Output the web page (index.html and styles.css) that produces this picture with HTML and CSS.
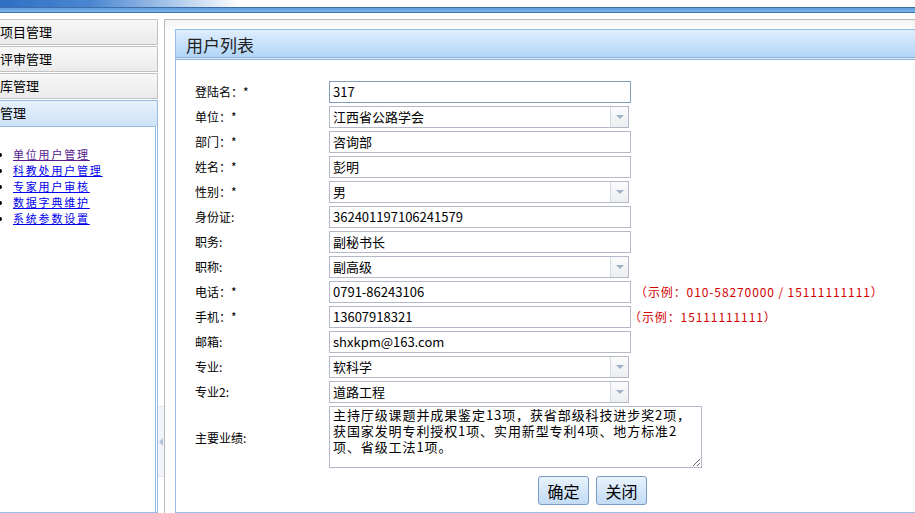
FILE: index.html
```html
<!DOCTYPE html>
<html lang="zh-CN">
<head>
    <meta charset="UTF-8">
    <title>用户列表</title>
    <link rel="stylesheet" href="styles.css">
</head>
<body>

<div class="banner"></div>
<div class="topbar"></div>

<div class="main">
    <aside class="sidebar">
        <div class="acc-head">项目管理</div>
        <div class="acc-head">评审管理</div>
        <div class="acc-head">库管理</div>
        <div class="acc-panel">
            <div class="acc-head active">管理</div>
            <div class="acc-body">
                <ul class="menu">
                    <li><a href="#" class="visited">单位用户管理</a></li>
                    <li><a href="#">科教处用户管理</a></li>
                    <li><a href="#">专家用户审核</a></li>
                    <li><a href="#">数据字典维护</a></li>
                    <li><a href="#">系统参数设置</a></li>
                </ul>
            </div>
        </div>
    </aside>

    <div class="splitter">
        <div class="collapse"><span class="arrow"></span></div>
    </div>

    <section class="content">
        <div class="panel">
            <div class="panel-head">用户列表</div>
            <form class="form">
                <label>登陆名：*</label>
                <div class="field"><input class="text focus" value="317"></div>

                <label>单位：*</label>
                <div class="field"><div class="combo"><span>江西省公路学会</span><i class="trigger"></i></div></div>

                <label>部门：*</label>
                <div class="field"><input class="text" value="咨询部"></div>

                <label>姓名：*</label>
                <div class="field"><input class="text" value="彭明"></div>

                <label>性别：*</label>
                <div class="field"><div class="combo"><span>男</span><i class="trigger"></i></div></div>

                <label>身份证:</label>
                <div class="field"><input class="text" value="362401197106241579"></div>

                <label>职务:</label>
                <div class="field"><input class="text" value="副秘书长"></div>

                <label>职称:</label>
                <div class="field"><div class="combo"><span>副高级</span><i class="trigger"></i></div></div>

                <label>电话：*</label>
                <div class="field"><input class="text" value="0791-86243106"><span class="hint">（示例：010-58270000 / 15111111111）</span></div>

                <label>手机：*</label>
                <div class="field"><input class="text" value="13607918321"><span class="hint near">（示例：15111111111）</span></div>

                <label>邮箱:</label>
                <div class="field"><input class="text" value="shxkpm@163.com"></div>

                <label>专业:</label>
                <div class="field"><div class="combo"><span>软科学</span><i class="trigger"></i></div></div>

                <label>专业2:</label>
                <div class="field"><div class="combo"><span>道路工程</span><i class="trigger"></i></div></div>

                <label class="tall">主要业绩:</label>
                <div class="field tall"><textarea class="area">主持厅级课题并成果鉴定13项，获省部级科技进步奖2项，获国家发明专利授权1项、实用新型专利4项、地方标准2项、省级工法1项。</textarea></div>

                <div class="buttons">
                    <button type="button" class="btn">确定</button>
                    <button type="button" class="btn">关闭</button>
                </div>
            </form>
        </div>
    </section>
</div>

</body>
</html>
```

FILE: styles.css
```css
* {
    margin: 0;
    padding: 0;
    box-sizing: border-box;
}

html, body {
    height: 100%;
    overflow: hidden;
}

body {
    font-family: "Noto Sans CJK SC", "Liberation Sans", sans-serif;
    font-size: 12px;
    color: #000;
    background-color: #fff;
}

/* top */
.banner {
    height: 7px;
    background: linear-gradient(to right, #2f6fc4 0, #4a86d0 90px, #a9c6ea 170px, #fff 240px);
}

.topbar {
    height: 6px;
    border-top: 1px solid #3d6ea8;
    border-bottom: 1px solid #3d6ea8;
    background: linear-gradient(#5d9fdc, #7ab4ea);
}

.main {
    display: flex;
    height: calc(100% - 13px);
    padding-top: 6px;
}

/* sidebar */
.sidebar {
    width: 159px;
    margin-left: -1px;
    display: flex;
    flex-direction: column;
    gap: 1px;
}

.acc-head {
    height: 26px;
    line-height: 24px;
    font-size: 13px;
    border: 1px solid #c2c2c2;
    background: linear-gradient(#f7f7f7, #ebebeb);
    white-space: nowrap;
}

.acc-panel {
    flex: 1;
    display: flex;
    flex-direction: column;
    border: 1px solid #99bbe8;
}

.acc-head.active {
    height: 25px;
    border: none;
    background: linear-gradient(#e6f1fd, #cde2f7);
}

.acc-body {
    flex: 1;
    margin-right: 1px;
    border-top: 1px solid #99bbe8;
    border-right: 1px solid #99bbe8;
    background-color: #fff;
    padding-top: 19px;
}

.menu {
    padding-left: 13px;
    font-size: 11px;
    letter-spacing: 1.8px;
    line-height: 16px;
}

.menu a {
    color: #0000ee;
}

.menu a.visited {
    color: #551a8b;
}

/* splitter */
.splitter {
    width: 6px;
    position: relative;
}

.collapse {
    position: absolute;
    left: 0;
    top: 387px;
    width: 6px;
    height: 71px;
    background-color: #f1f5fa;
    border-top: 1px solid #dfe6ef;
    border-bottom: 1px solid #dfe6ef;
}

.arrow {
    position: absolute;
    left: 1px;
    top: 31px;
    border-top: 4px solid transparent;
    border-bottom: 4px solid transparent;
    border-right: 4px solid #b3c2d6;
}

/* content */
.content {
    flex: 1;
    border-top: 1px solid #b8b8b8;
    border-left: 1px solid #b8b8b8;
    background: linear-gradient(#f3f3f3, #fff 12px);
    padding: 9px 0 0 10px;
    min-width: 0;
}

.panel {
    height: 100%;
    border: 1px solid #99bbe8;
    border-right: none;
    background-color: #fff;
}

.panel-head {
    height: 30px;
    line-height: 29px;
    padding-left: 10px;
    font-size: 17px;
    color: #222;
    background: linear-gradient(#e0eefd, #b0d5f8);
    border-bottom: 3px double #8fb0d6;
}

.form {
    display: grid;
    grid-template-columns: 134px 1fr;
    grid-auto-rows: 25px;
    padding: 19px 0 0 19px;
}

.form label {
    display: flex;
    align-items: center;
    white-space: nowrap;
}

.field {
    display: flex;
    align-items: center;
}

.text {
    width: 302px;
    height: 22px;
    border: 1px solid #b5b8c8;
    padding: 0 3px;
    font-family: inherit;
    font-size: 13px;
    color: #000;
    outline: none;
}

.text.focus {
    border-color: #7f9db9;
}

.combo {
    width: 300px;
    height: 22px;
    border: 1px solid #b5b8c8;
    display: flex;
    align-items: center;
    font-size: 13px;
    padding-left: 3px;
}

.combo span {
    flex: 1;
}

.trigger {
    width: 18px;
    height: 20px;
    border-left: 1px solid #d4d8e0;
    background: linear-gradient(#fbfbfb, #eceef2);
    position: relative;
}

.trigger::after {
    content: "";
    position: absolute;
    left: 5px;
    top: 8px;
    border-left: 4px solid transparent;
    border-right: 4px solid transparent;
    border-top: 4px solid #9fb1c8;
}

.hint {
    color: #d40000;
    font-size: 12px;
    letter-spacing: 0.9px;
    margin-left: 4px;
    white-space: nowrap;
}

.hint.near {
    margin-left: -2px;
}

.form .tall {
    grid-row: span 3;
    height: 64px;
    margin-top: 1px;
}

.area {
    width: 373px;
    height: 62px;
    border: 1px solid #b5b8c8;
    padding: 0 3px;
    font-family: inherit;
    font-size: 13px;
    line-height: 16px;
    letter-spacing: 0.9px;
    resize: both;
    overflow: hidden;
}

.buttons {
    grid-column: 2;
    display: flex;
    gap: 7px;
    padding-left: 209px;
    margin-top: -3px;
}

.btn {
    width: 51px;
    height: 29px;
    font-family: inherit;
    font-size: 16px;
    color: #000;
    border: 1px solid #7a9cc3;
    border-radius: 3px;
    background: linear-gradient(#e8f2fd, #c2dbf4);
    cursor: pointer;
}
```
